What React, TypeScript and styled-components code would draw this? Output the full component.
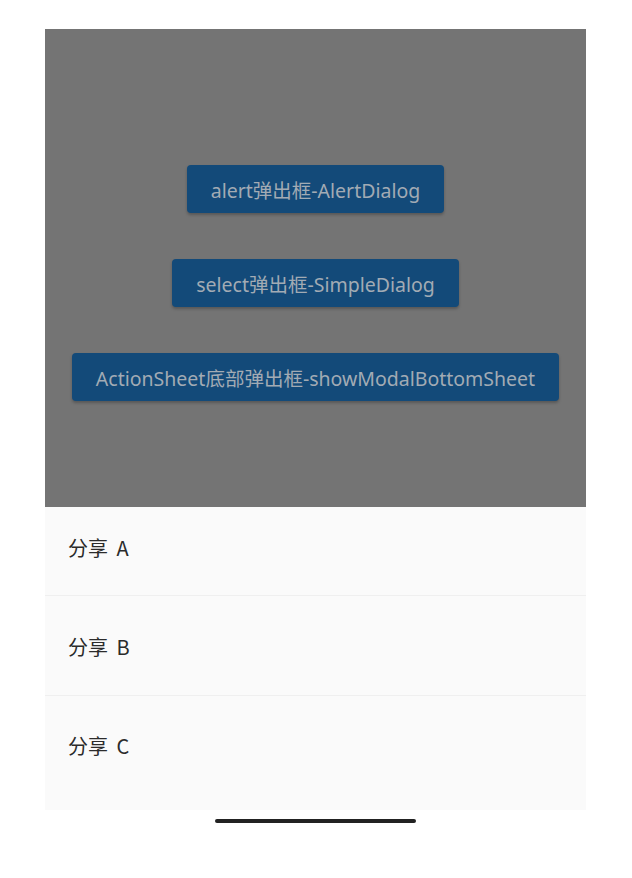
import React from 'react'
import styled, { createGlobalStyle } from 'styled-components'

const GlobalStyle = createGlobalStyle`
  html, body {
    margin: 0;
    padding: 0;
    background: #ffffff;
  }
  body {
    font-family: "Noto Sans", "Noto Sans CJK SC", sans-serif;
  }
`

const Page = styled.div`
  width: 632px;
  height: 878px;
  padding-top: 29px;
  box-sizing: border-box;
  background: #ffffff;
`

const Screen = styled.div`
  width: 541px;
  margin-left: 45px;
  display: flex;
  flex-direction: column;
`

const Backdrop = styled.div`
  height: 478px;
  background: #747474;
  display: flex;
  flex-direction: column;
  align-items: center;
  gap: 46px;
  padding-top: 136px;
  box-sizing: border-box;
`

const DemoButton = styled.div`
  height: 48px;
  padding: 0 24px;
  display: flex;
  align-items: center;
  justify-content: center;
  background: #134a79;
  color: #a2abb4;
  font-size: 19.5px;
  border-radius: 4px;
  box-shadow: 0 2px 3px rgba(0, 0, 0, 0.25);
  white-space: nowrap;
`

const Sheet = styled.div`
  background: #fafafa;
  display: flex;
  flex-direction: column;
  height: 303px;
`

const SheetRow = styled.div<{ $h: number; $top: number; $last?: boolean }>`
  height: ${({ $h }) => $h}px;
  padding: ${({ $top }) => $top}px 0 0 23px;
  box-sizing: border-box;
  border-bottom: ${({ $last }) => ($last ? 'none' : '1px solid #efefef')};
  font-family: "Noto Sans CJK SC", "Noto Sans", sans-serif;
  font-size: 20px;
  line-height: 28px;
  word-spacing: 4px;
  color: #2b2b2b;
`

const HomeBar = styled.div`
  align-self: center;
  width: 201px;
  height: 4px;
  border-radius: 2px;
  background: #222222;
  margin-top: 9px;
`

const buttons = [
  'alert弹出框-AlertDialog',
  'select弹出框-SimpleDialog',
  'ActionSheet底部弹出框-showModalBottomSheet',
]

const App = () => (
  <>
    <GlobalStyle />
    <Page>
      <Screen>
        <Backdrop>
          {buttons.map((b) => (
            <DemoButton key={b}>{b}</DemoButton>
          ))}
        </Backdrop>
        <Sheet>
          <SheetRow $h={89} $top={27}>分享 A</SheetRow>
          <SheetRow $h={100} $top={37}>分享 B</SheetRow>
          <SheetRow $h={114} $top={36} $last>
            分享 C
          </SheetRow>
        </Sheet>
        <HomeBar />
      </Screen>
    </Page>
  </>
)

export default App
